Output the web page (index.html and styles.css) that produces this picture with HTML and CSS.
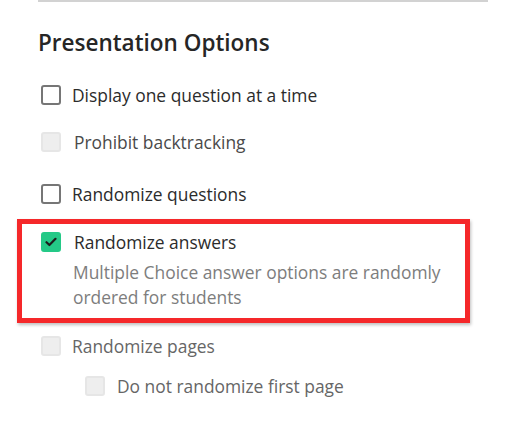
FILE: index.html
```html
<!DOCTYPE html>
<html lang="en">
<head>
    <meta charset="UTF-8">
    <title>Presentation Options</title>
    <link rel="stylesheet" href="styles.css">
</head>
<body>
    <div class="panel">
        <h2>Presentation Options</h2>

        <label class="option">
            <span class="box"></span>
            <span class="text">Display one question at a time</span>
        </label>

        <label class="option option-off wide">
            <span class="box"></span>
            <span class="text">Prohibit backtracking</span>
        </label>

        <label class="option option-row3">
            <span class="box"></span>
            <span class="text">Randomize questions</span>
        </label>

        <div class="marked">
            <label class="option wide">
                <span class="box box-on">
                    <svg width="12" height="10" viewBox="0 0 12 10"><path d="M1.5 5.2 L4.4 8 L10.5 1.8" fill="none" stroke="#1d1d1d" stroke-width="2.2" stroke-linecap="round" stroke-linejoin="round"/></svg>
                </span>
                <span class="text">Randomize answers</span>
            </label>
            <p class="hint">Multiple Choice answer options are randomly<br>ordered for students</p>
            <div class="highlight"></div>
        </div>

        <label class="option option-off option-pages">
            <span class="box"></span>
            <span class="text">Randomize pages</span>
        </label>

        <label class="option option-off sub">
            <span class="box"></span>
            <span class="text">Do not randomize first page</span>
        </label>
    </div>
</body>
</html>
```

FILE: styles.css
```css
body { margin: 0; background: #fff; font-family: "Open Sans", Arial, sans-serif; color: #2b2b2b; }
.panel { margin-left: 38px; width: 450px; border-top: 2px solid #d2d2d2; padding-top: 27px; }
h2 { margin: 0; font-size: 22.5px; font-weight: 600; line-height: 28px; color: #262626; }

.option { display: flex; align-items: center; height: 24px; margin-top: 26px; margin-left: 3px; font-size: 17.4px; cursor: pointer; }
.option + .option { margin-top: 23px; }
.option-row3 { margin-top: 28px !important; }
.box { width: 20px; height: 20px; box-sizing: border-box; border: 2px solid #767676; border-radius: 3px; margin-right: 11px; flex-shrink: 0; display: flex; align-items: center; justify-content: center; }
.wide .box { margin-right: 13px; }
.option-off .box { background: #eeeeee; border-color: #e6e6e6; }
.option-off .text { color: #4a4a4a; }
.option-off.option-pages .text, .option-off.sub .text { color: #666; }
.box-on { background: #24c987; border-color: #24c987; }

.marked { position: relative; margin-top: 24px; }
.marked .option { margin-top: 0; }
.hint { margin: 6px 0 0 35px; font-size: 17.4px; line-height: 25px; color: #7d7d7d; }
.highlight { position: absolute; left: -21px; top: -11px; width: 443px; height: 94px; border: 5px solid #f5282a; box-shadow: 1px 2px 3px rgba(0, 0, 0, 0.25); pointer-events: none; }

.option-pages { margin-top: 24px; }
.option.sub { margin-top: 16px; margin-left: 47px; }
.sub .box { margin-right: 12px; }
```
